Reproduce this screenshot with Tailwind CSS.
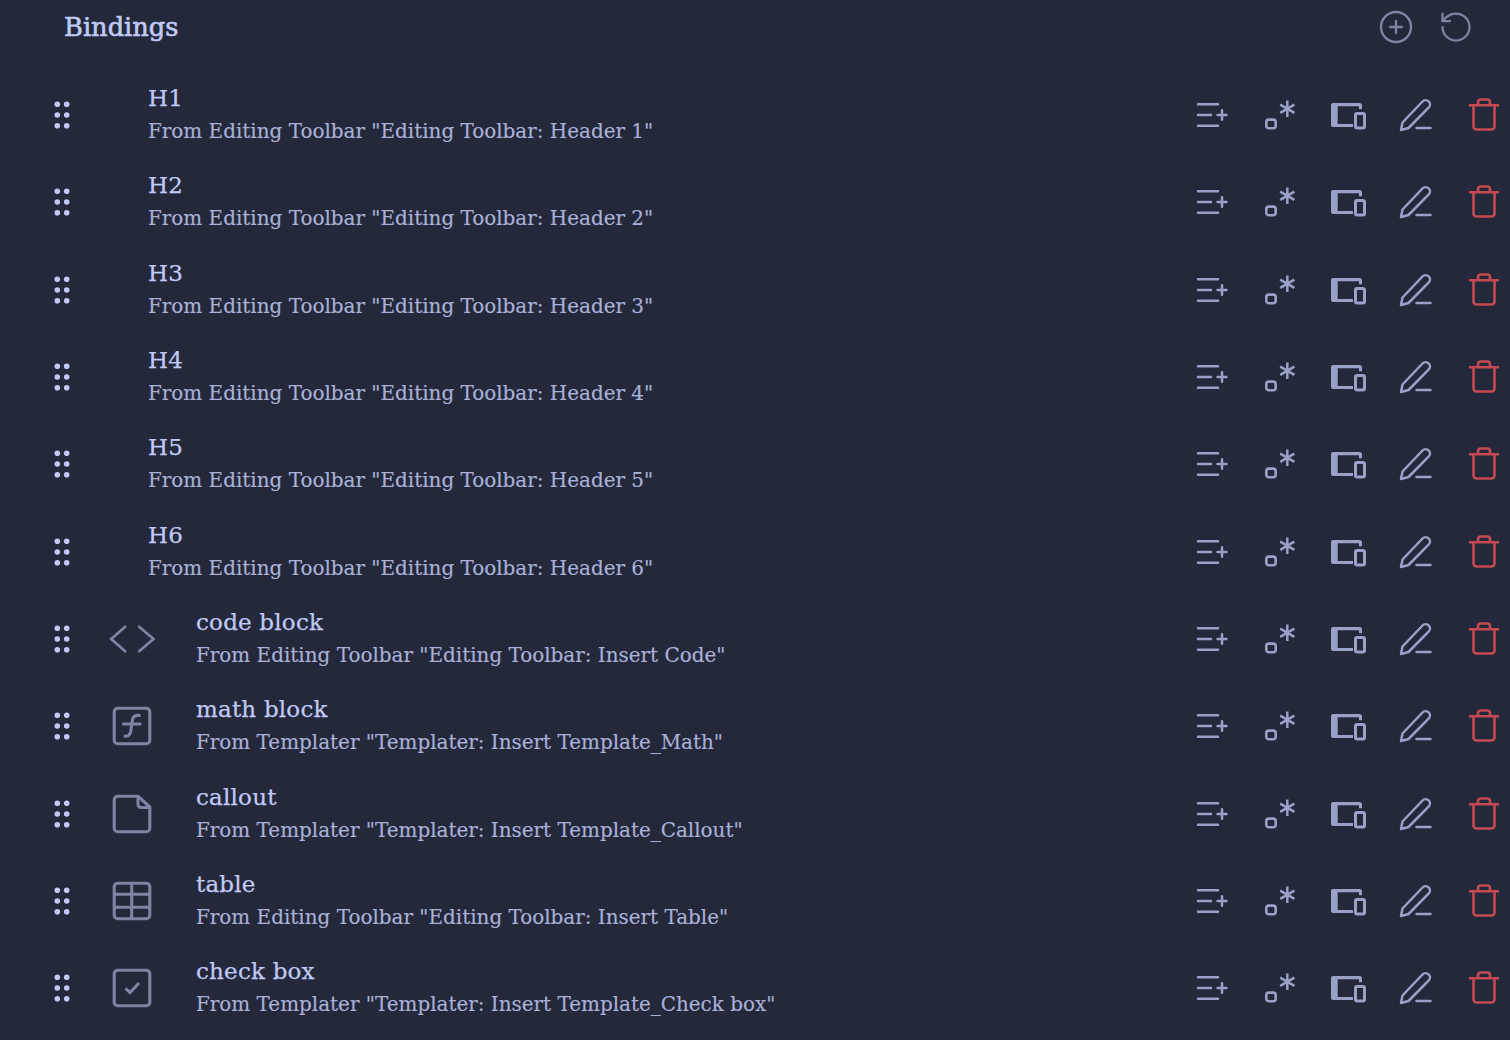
<!DOCTYPE html>
<html><head><meta charset="utf-8"><title>Bindings</title><script src="https://cdn.jsdelivr.net/npm/@tailwindcss/browser@4"></script></head>
<body class="bg-[#24283b] w-[1510px] h-[1040px] overflow-hidden font-['DejaVu_Serif',serif]">
<svg class="hidden" xmlns="http://www.w3.org/2000/svg">
<symbol id="grip" viewBox="0 0 28 36"><g fill="currentColor"><circle cx="9.3" cy="7.3" r="2.8"/><circle cx="18.7" cy="7.3" r="2.8"/><circle cx="9.3" cy="18" r="2.8"/><circle cx="18.7" cy="18" r="2.8"/><circle cx="9.3" cy="28.7" r="2.8"/><circle cx="18.7" cy="28.7" r="2.8"/></g></symbol>
<symbol id="listplus" viewBox="0 0 36 36"><path d="M4 7.3H24M4 18H17M4 28.7H24M23.5 18H32.5M28 13.2V22.8" fill="none" stroke="currentColor" stroke-width="2.5" stroke-linecap="round"/></symbol>
<symbol id="key" viewBox="0 0 36 36"><rect x="4.3" y="22.6" width="9.4" height="8.6" rx="2.5" fill="none" stroke="currentColor" stroke-width="2.6"/><path d="M25.3 3.5V20M18.2 7.6L32.4 15.9M32.4 7.6L18.2 15.9" fill="none" stroke="currentColor" stroke-width="2.5"/></symbol>
<symbol id="devices" viewBox="0 0 36 36"><path d="M3 6H29.5A2.5 2.5 0 0 1 32 8.5V12.3H29V9.3H7.7V27H23V30H3A2 2 0 0 1 1 28V8A2 2 0 0 1 3 6Z" fill="currentColor"/><rect x="25.5" y="16.5" width="9" height="14.6" rx="1.5" fill="none" stroke="currentColor" stroke-width="3"/></symbol>
<symbol id="pen" viewBox="0 0 36 36"><path d="M3 33L4.5 25.5L24.5 4.5A4.3 4.3 0 0 1 30.8 10.4L10.5 31ZM18.5 31H32.5" fill="none" stroke="currentColor" stroke-width="2.5" stroke-linecap="round" stroke-linejoin="round"/></symbol>
<symbol id="trash" viewBox="0 0 36 36"><path d="M4 8.3H32M7.5 8.3V29.5A3 3 0 0 0 10.5 32.5H25.5A3 3 0 0 0 28.5 29.5V8.3M12 8.3V5A2.5 2.5 0 0 1 14.5 2.5H21.5A2.5 2.5 0 0 1 24 5V8.3" fill="none" stroke="currentColor" stroke-width="2.6" stroke-linecap="round" stroke-linejoin="round"/></symbol>
</svg>
<header class="h-[71.55px] flex justify-between pl-[64px] pr-[36px] pb-[17.55px] items-center">
  <h1 class="text-[25.7px] leading-[54px] text-[#c0caf5] [-webkit-text-stroke:0.6px_#c0caf5]">Bindings</h1>
  <div class="flex gap-[24px] text-[#7f84a3]">
    <svg class="w-[36px] h-[36px]" viewBox="0 0 36 36" fill="none" stroke="currentColor" stroke-width="2.3" stroke-linecap="round"><circle cx="18" cy="18" r="15"/><path d="M12 18H24M18 12V24"/></svg>
    <svg class="w-[36px] h-[36px]" viewBox="0 0 24 24" fill="none" stroke="currentColor" stroke-width="1.5" stroke-linecap="round" stroke-linejoin="round"><path d="M3 12a9 9 0 1 0 9-9 9.75 9.75 0 0 0-6.74 2.74L3 8"/><path d="M3 3v5h5"/></svg>
  </div>
</header>
<main>
<div class="h-[87.3px] flex items-center pl-[48px] pr-[8px]"><svg class="w-[28px] h-[36px] text-[#c0caf5]"><use href="#grip"/></svg>
  <div class="ml-[72px] flex-1"><div class="text-[23px] leading-[30px] mb-[2px] tracking-[0.2px] [-webkit-text-stroke:0.25px_#c0caf5] text-[#c0caf5]">H1</div><div class="text-[19.95px] leading-[32px] [-webkit-text-stroke:0.15px_#a9b1d6] text-[#a9b1d6]">From Editing Toolbar "Editing Toolbar: Header 1"</div></div>
  <div class="flex gap-[32px] text-[#9aa1c6]"><svg class="w-[36px] h-[36px]"><use href="#listplus"/></svg><svg class="w-[36px] h-[36px]"><use href="#key"/></svg><svg class="w-[36px] h-[36px]"><use href="#devices"/></svg><svg class="w-[36px] h-[36px]"><use href="#pen"/></svg><svg class="w-[36px] h-[36px] text-[#c44a50]"><use href="#trash"/></svg></div></div>
<div class="h-[87.3px] flex items-center pl-[48px] pr-[8px]"><svg class="w-[28px] h-[36px] text-[#c0caf5]"><use href="#grip"/></svg>
  <div class="ml-[72px] flex-1"><div class="text-[23px] leading-[30px] mb-[2px] tracking-[0.2px] [-webkit-text-stroke:0.25px_#c0caf5] text-[#c0caf5]">H2</div><div class="text-[19.95px] leading-[32px] [-webkit-text-stroke:0.15px_#a9b1d6] text-[#a9b1d6]">From Editing Toolbar "Editing Toolbar: Header 2"</div></div>
  <div class="flex gap-[32px] text-[#9aa1c6]"><svg class="w-[36px] h-[36px]"><use href="#listplus"/></svg><svg class="w-[36px] h-[36px]"><use href="#key"/></svg><svg class="w-[36px] h-[36px]"><use href="#devices"/></svg><svg class="w-[36px] h-[36px]"><use href="#pen"/></svg><svg class="w-[36px] h-[36px] text-[#c44a50]"><use href="#trash"/></svg></div></div>
<div class="h-[87.3px] flex items-center pl-[48px] pr-[8px]"><svg class="w-[28px] h-[36px] text-[#c0caf5]"><use href="#grip"/></svg>
  <div class="ml-[72px] flex-1"><div class="text-[23px] leading-[30px] mb-[2px] tracking-[0.2px] [-webkit-text-stroke:0.25px_#c0caf5] text-[#c0caf5]">H3</div><div class="text-[19.95px] leading-[32px] [-webkit-text-stroke:0.15px_#a9b1d6] text-[#a9b1d6]">From Editing Toolbar "Editing Toolbar: Header 3"</div></div>
  <div class="flex gap-[32px] text-[#9aa1c6]"><svg class="w-[36px] h-[36px]"><use href="#listplus"/></svg><svg class="w-[36px] h-[36px]"><use href="#key"/></svg><svg class="w-[36px] h-[36px]"><use href="#devices"/></svg><svg class="w-[36px] h-[36px]"><use href="#pen"/></svg><svg class="w-[36px] h-[36px] text-[#c44a50]"><use href="#trash"/></svg></div></div>
<div class="h-[87.3px] flex items-center pl-[48px] pr-[8px]"><svg class="w-[28px] h-[36px] text-[#c0caf5]"><use href="#grip"/></svg>
  <div class="ml-[72px] flex-1"><div class="text-[23px] leading-[30px] mb-[2px] tracking-[0.2px] [-webkit-text-stroke:0.25px_#c0caf5] text-[#c0caf5]">H4</div><div class="text-[19.95px] leading-[32px] [-webkit-text-stroke:0.15px_#a9b1d6] text-[#a9b1d6]">From Editing Toolbar "Editing Toolbar: Header 4"</div></div>
  <div class="flex gap-[32px] text-[#9aa1c6]"><svg class="w-[36px] h-[36px]"><use href="#listplus"/></svg><svg class="w-[36px] h-[36px]"><use href="#key"/></svg><svg class="w-[36px] h-[36px]"><use href="#devices"/></svg><svg class="w-[36px] h-[36px]"><use href="#pen"/></svg><svg class="w-[36px] h-[36px] text-[#c44a50]"><use href="#trash"/></svg></div></div>
<div class="h-[87.3px] flex items-center pl-[48px] pr-[8px]"><svg class="w-[28px] h-[36px] text-[#c0caf5]"><use href="#grip"/></svg>
  <div class="ml-[72px] flex-1"><div class="text-[23px] leading-[30px] mb-[2px] tracking-[0.2px] [-webkit-text-stroke:0.25px_#c0caf5] text-[#c0caf5]">H5</div><div class="text-[19.95px] leading-[32px] [-webkit-text-stroke:0.15px_#a9b1d6] text-[#a9b1d6]">From Editing Toolbar "Editing Toolbar: Header 5"</div></div>
  <div class="flex gap-[32px] text-[#9aa1c6]"><svg class="w-[36px] h-[36px]"><use href="#listplus"/></svg><svg class="w-[36px] h-[36px]"><use href="#key"/></svg><svg class="w-[36px] h-[36px]"><use href="#devices"/></svg><svg class="w-[36px] h-[36px]"><use href="#pen"/></svg><svg class="w-[36px] h-[36px] text-[#c44a50]"><use href="#trash"/></svg></div></div>
<div class="h-[87.3px] flex items-center pl-[48px] pr-[8px]"><svg class="w-[28px] h-[36px] text-[#c0caf5]"><use href="#grip"/></svg>
  <div class="ml-[72px] flex-1"><div class="text-[23px] leading-[30px] mb-[2px] tracking-[0.2px] [-webkit-text-stroke:0.25px_#c0caf5] text-[#c0caf5]">H6</div><div class="text-[19.95px] leading-[32px] [-webkit-text-stroke:0.15px_#a9b1d6] text-[#a9b1d6]">From Editing Toolbar "Editing Toolbar: Header 6"</div></div>
  <div class="flex gap-[32px] text-[#9aa1c6]"><svg class="w-[36px] h-[36px]"><use href="#listplus"/></svg><svg class="w-[36px] h-[36px]"><use href="#key"/></svg><svg class="w-[36px] h-[36px]"><use href="#devices"/></svg><svg class="w-[36px] h-[36px]"><use href="#pen"/></svg><svg class="w-[36px] h-[36px] text-[#c44a50]"><use href="#trash"/></svg></div></div>
<div class="h-[87.3px] flex items-center pl-[48px] pr-[8px]"><svg class="w-[28px] h-[36px] text-[#c0caf5]"><use href="#grip"/></svg>
  <svg class="ml-[32px] w-[48px] h-[48px] text-[#7f84a3]" viewBox="0 0 48 48" fill="none" stroke="currentColor" stroke-width="2.7"><path d="M18 11L3.2 24L18 37M30.3 11L45.5 24L30.3 37"/></svg>
  <div class="ml-[40px] flex-1"><div class="text-[23px] leading-[30px] mb-[2px] tracking-[0.2px] [-webkit-text-stroke:0.25px_#c0caf5] text-[#c0caf5]">code block</div><div class="text-[19.95px] leading-[32px] [-webkit-text-stroke:0.15px_#a9b1d6] text-[#a9b1d6]">From Editing Toolbar "Editing Toolbar: Insert Code"</div></div>
  <div class="flex gap-[32px] text-[#9aa1c6]"><svg class="w-[36px] h-[36px]"><use href="#listplus"/></svg><svg class="w-[36px] h-[36px]"><use href="#key"/></svg><svg class="w-[36px] h-[36px]"><use href="#devices"/></svg><svg class="w-[36px] h-[36px]"><use href="#pen"/></svg><svg class="w-[36px] h-[36px] text-[#c44a50]"><use href="#trash"/></svg></div></div>
<div class="h-[87.3px] flex items-center pl-[48px] pr-[8px]"><svg class="w-[28px] h-[36px] text-[#c0caf5]"><use href="#grip"/></svg>
  <svg class="ml-[32px] w-[48px] h-[48px] text-[#7f84a3]" viewBox="0 0 48 48" fill="none" stroke="currentColor" stroke-width="3.1"><rect x="6.2" y="6.2" width="35.6" height="35.6" rx="3.5"/><path d="M31.3 13.5C27 13 25 14.5 24.4 18L22.8 29C22.2 33 20.5 34.5 17 34.2M15.5 22H32" stroke-linecap="round"/></svg>
  <div class="ml-[40px] flex-1"><div class="text-[23px] leading-[30px] mb-[2px] tracking-[0.2px] [-webkit-text-stroke:0.25px_#c0caf5] text-[#c0caf5]">math block</div><div class="text-[19.95px] leading-[32px] [-webkit-text-stroke:0.15px_#a9b1d6] text-[#a9b1d6]">From Templater "Templater: Insert Template_Math"</div></div>
  <div class="flex gap-[32px] text-[#9aa1c6]"><svg class="w-[36px] h-[36px]"><use href="#listplus"/></svg><svg class="w-[36px] h-[36px]"><use href="#key"/></svg><svg class="w-[36px] h-[36px]"><use href="#devices"/></svg><svg class="w-[36px] h-[36px]"><use href="#pen"/></svg><svg class="w-[36px] h-[36px] text-[#c44a50]"><use href="#trash"/></svg></div></div>
<div class="h-[87.3px] flex items-center pl-[48px] pr-[8px]"><svg class="w-[28px] h-[36px] text-[#c0caf5]"><use href="#grip"/></svg>
  <svg class="ml-[32px] w-[48px] h-[48px] text-[#7f84a3]" viewBox="0 0 48 48" fill="none" stroke="currentColor" stroke-width="3.1" stroke-linejoin="round"><path d="M9.7 6.2H30L41.8 17V38.3A3.5 3.5 0 0 1 38.3 41.8H9.7A3.5 3.5 0 0 1 6.2 38.3V9.7A3.5 3.5 0 0 1 9.7 6.2ZM30 6.2V14.5A3 3 0 0 0 33 17.5H41.8"/></svg>
  <div class="ml-[40px] flex-1"><div class="text-[23px] leading-[30px] mb-[2px] tracking-[0.2px] [-webkit-text-stroke:0.25px_#c0caf5] text-[#c0caf5]">callout</div><div class="text-[19.95px] leading-[32px] [-webkit-text-stroke:0.15px_#a9b1d6] text-[#a9b1d6]">From Templater "Templater: Insert Template_Callout"</div></div>
  <div class="flex gap-[32px] text-[#9aa1c6]"><svg class="w-[36px] h-[36px]"><use href="#listplus"/></svg><svg class="w-[36px] h-[36px]"><use href="#key"/></svg><svg class="w-[36px] h-[36px]"><use href="#devices"/></svg><svg class="w-[36px] h-[36px]"><use href="#pen"/></svg><svg class="w-[36px] h-[36px] text-[#c44a50]"><use href="#trash"/></svg></div></div>
<div class="h-[87.3px] flex items-center pl-[48px] pr-[8px]"><svg class="w-[28px] h-[36px] text-[#c0caf5]"><use href="#grip"/></svg>
  <svg class="ml-[32px] w-[48px] h-[48px] text-[#7f84a3]" viewBox="0 0 48 48" fill="none" stroke="currentColor" stroke-width="3.1"><rect x="6.2" y="6.2" width="35.6" height="35.6" rx="3.5"/><path d="M6 17.3H42M6 30.3H42M23.7 6V42"/></svg>
  <div class="ml-[40px] flex-1"><div class="text-[23px] leading-[30px] mb-[2px] tracking-[0.2px] [-webkit-text-stroke:0.25px_#c0caf5] text-[#c0caf5]">table</div><div class="text-[19.95px] leading-[32px] [-webkit-text-stroke:0.15px_#a9b1d6] text-[#a9b1d6]">From Editing Toolbar "Editing Toolbar: Insert Table"</div></div>
  <div class="flex gap-[32px] text-[#9aa1c6]"><svg class="w-[36px] h-[36px]"><use href="#listplus"/></svg><svg class="w-[36px] h-[36px]"><use href="#key"/></svg><svg class="w-[36px] h-[36px]"><use href="#devices"/></svg><svg class="w-[36px] h-[36px]"><use href="#pen"/></svg><svg class="w-[36px] h-[36px] text-[#c44a50]"><use href="#trash"/></svg></div></div>
<div class="h-[87.3px] flex items-center pl-[48px] pr-[8px]"><svg class="w-[28px] h-[36px] text-[#c0caf5]"><use href="#grip"/></svg>
  <svg class="ml-[32px] w-[48px] h-[48px] text-[#7f84a3]" viewBox="0 0 48 48" fill="none" stroke="currentColor" stroke-width="3.1"><rect x="6.2" y="6.2" width="35.6" height="35.6" rx="3.5"/><path d="M17.5 24.3L22 28.5L31 19"/></svg>
  <div class="ml-[40px] flex-1"><div class="text-[23px] leading-[30px] mb-[2px] tracking-[0.2px] [-webkit-text-stroke:0.25px_#c0caf5] text-[#c0caf5]">check box</div><div class="text-[19.95px] leading-[32px] [-webkit-text-stroke:0.15px_#a9b1d6] text-[#a9b1d6]">From Templater "Templater: Insert Template_Check box"</div></div>
  <div class="flex gap-[32px] text-[#9aa1c6]"><svg class="w-[36px] h-[36px]"><use href="#listplus"/></svg><svg class="w-[36px] h-[36px]"><use href="#key"/></svg><svg class="w-[36px] h-[36px]"><use href="#devices"/></svg><svg class="w-[36px] h-[36px]"><use href="#pen"/></svg><svg class="w-[36px] h-[36px] text-[#c44a50]"><use href="#trash"/></svg></div></div>
</main>
</body></html>
